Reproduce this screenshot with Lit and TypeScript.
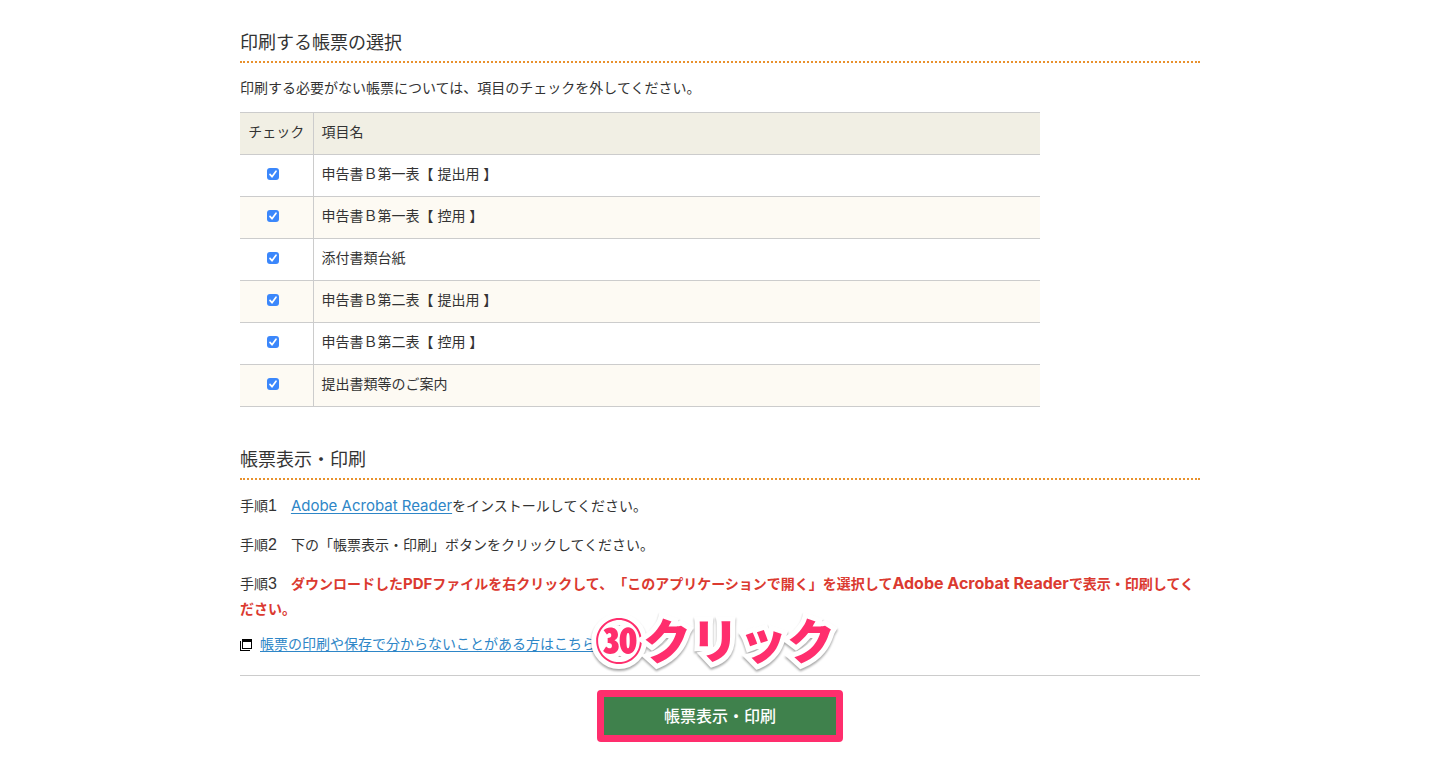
import { LitElement, html, css } from "lit";
import { customElement, state } from "lit/decorators.js";

interface FormItem {
  id: string;
  name: string;
  checked: boolean;
}

@customElement("app-root")
export class AppRoot extends LitElement {
  static styles = css`
    :host {
      display: block;
      color: #333;
      background: #fff;
      font-family: "Liberation Sans", "Noto Sans CJK JP", sans-serif;
      font-size: 14px;
      line-height: 25px;
      text-spacing-trim: space-all;
    }
    main {
      max-width: 960px;
      margin: 0 auto;
      padding: 28px 16px;
    }
    h2 {
      margin: 0 0 13px;
      padding-bottom: 3px;
      border-bottom: 2px dotted #e8912d;
      font-size: 18px;
      font-weight: 400;
      line-height: 30px;
    }
    p {
      margin: 0;
    }
    .forms {
      margin-bottom: 38px;
    }
    table {
      width: 100%;
      max-width: 800px;
      margin-top: 11px;
      border-collapse: collapse;
    }
    th,
    td {
      height: 42px;
      padding: 0 8px 3px;
      box-sizing: border-box;
      border-top: 1px solid #ccc;
      border-bottom: 1px solid #ccc;
      font-weight: 400;
      text-align: left;
      line-height: 24px;
    }
    th {
      background: #f1efe4;
    }
    .check {
      width: 73px;
      border-right: 1px solid #ccc;
      text-align: center;
      white-space: nowrap;
    }
    td.check {
      padding-right: 15px;
    }
    tbody tr:nth-child(even) {
      background: #fdfaf3;
    }
    input {
      appearance: none;
      display: block;
      width: 12px;
      height: 12px;
      margin: 0 auto;
      border: 1px solid #999;
      border-radius: 3px;
      background: #fff;
    }
    input:checked {
      border: 0;
      background: #3b87fb
        url("data:image/svg+xml,%3Csvg xmlns='http://www.w3.org/2000/svg' viewBox='0 0 12 12'%3E%3Cpath d='M3 6.4 5 8.8 9 3.2' fill='none' stroke='white' stroke-width='1.7' stroke-linecap='round' stroke-linejoin='round'/%3E%3C/svg%3E");
    }
    .steps {
      display: grid;
      gap: 14px;
      padding-top: 1px;
    }
    .num {
      font-size: 16px;
      line-height: 1;
    }
    .latin {
      font-family: Inter, sans-serif;
      font-size: 15px;
      line-height: 1;
    }
    a {
      color: #2e86c7;
      text-underline-offset: 2px;
    }
    strong {
      color: #db3a30;
      font-weight: 700;
    }
    strong .product {
      font-size: 16px;
    }
    .help {
      display: flex;
      align-items: center;
      gap: 8px;
      margin-top: 10px;
      padding-bottom: 18px;
      border-bottom: 1px solid #ccc;
    }
    .window {
      width: 12px;
      height: 12px;
    }
    .action {
      display: flex;
      justify-content: center;
      padding-top: 21px;
    }
    .marked {
      position: relative;
    }
    .marked::after {
      content: "";
      position: absolute;
      inset: -7px;
      border: 7px solid #ff2e6d;
      border-radius: 4px;
      pointer-events: none;
    }
    button {
      display: block;
      width: 232px;
      height: 38px;
      padding: 0 0 2px;
      border: 0;
      background: #3f814c;
      color: #fff;
      font: 500 16px/24px "Noto Sans CJK JP", sans-serif;
    }
    .note {
      position: absolute;
      left: -9px;
      bottom: 61px;
      display: flex;
      align-items: center;
      color: #ff2e6d;
      font: 900 48px/72px "Noto Sans CJK JP", sans-serif;
      white-space: nowrap;
      -webkit-text-stroke: 10px #fff;
      paint-order: stroke fill;
      filter: drop-shadow(0 2px 1px rgb(0 0 0 / 35%));
      pointer-events: none;
    }
  `;

  @state() private items: FormItem[] = [
    { id: "b1-submit", name: "申告書Ｂ第一表【 提出用 】", checked: true },
    { id: "b1-copy", name: "申告書Ｂ第一表【 控用 】", checked: true },
    { id: "attachments", name: "添付書類台紙", checked: true },
    { id: "b2-submit", name: "申告書Ｂ第二表【 提出用 】", checked: true },
    { id: "b2-copy", name: "申告書Ｂ第二表【 控用 】", checked: true },
    { id: "guide", name: "提出書類等のご案内", checked: true },
  ];

  private toggle(id: string) {
    this.items = this.items.map((i) => (i.id === id ? { ...i, checked: !i.checked } : i));
  }

  render() {
    return html`
      <main lang="ja">
        <section class="forms">
          <h2>印刷する帳票の選択</h2>
          <p>印刷する必要がない帳票については、項目のチェックを外してください。</p>
          <table>
            <thead>
              <tr>
                <th class="check" scope="col">チェック</th>
                <th scope="col">項目名</th>
              </tr>
            </thead>
            <tbody>
              ${this.items.map(
                (i) => html`<tr>
                  <td class="check">
                    <input type="checkbox" id=${i.id} .checked=${i.checked} @change=${() => this.toggle(i.id)} />
                  </td>
                  <td><label for=${i.id}>${i.name}</label></td>
                </tr>`
              )}
            </tbody>
          </table>
        </section>
        <section>
          <h2>帳票表示・印刷</h2>
          <div class="steps">
            <p>手順<span class="num">1</span>　<a href="#reader"><span class="latin">Adobe Acrobat Reader</span></a>をインストールしてください。</p>
            <p>手順<span class="num">2</span>　下の「帳票表示・印刷」ボタンをクリックしてください。</p>
            <p>手順<span class="num">3</span>　<strong>ダウンロードした<span class="latin">PDF</span>ファイルを右クリックして、「このアプリケーションで開く」を選択して<span class="latin product">Adobe Acrobat Reader</span>で表示・印刷してください。</strong></p>
          </div>
          <p class="help">
            <svg class="window" viewBox="0 0 12 12" aria-hidden="true">
              <path d="M0 2h1v9h9v1H0zM2 0h10v10H2zM3 3v6h8V3z" fill="#000" fill-rule="evenodd" />
            </svg>
            <a href="#help">帳票の印刷や保存で分からないことがある方はこちら</a>
          </p>
          <div class="action">
            <div class="marked">
              <button type="button">帳票表示・印刷</button>
              <div class="note"><span>㉚</span><span>クリック</span></div>
            </div>
          </div>
        </section>
      </main>
    `;
  }
}
